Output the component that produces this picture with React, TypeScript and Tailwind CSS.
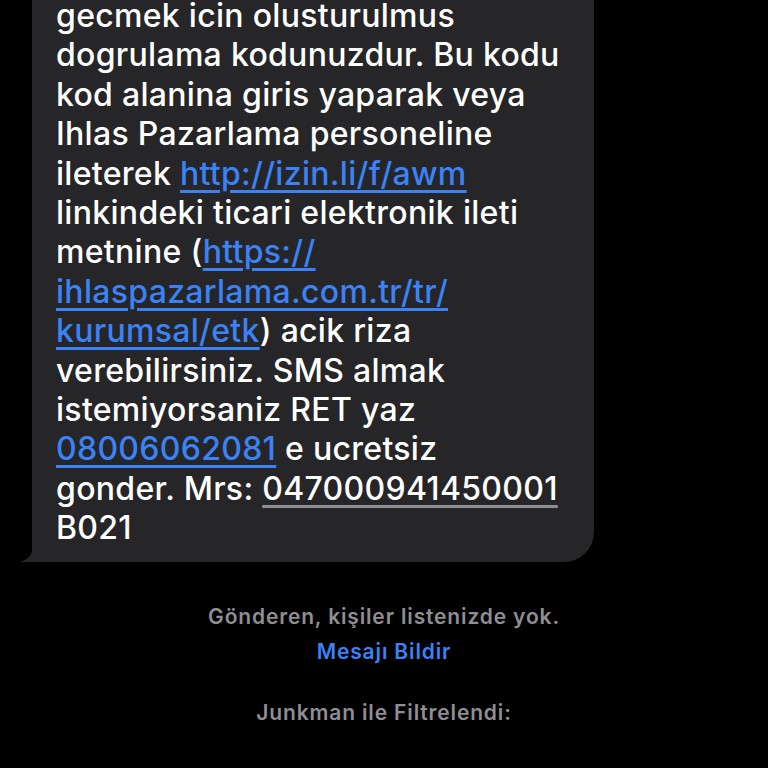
import React from 'react';

const Link: React.FC<{ children: React.ReactNode }> = ({ children }) => (
  <span className="text-[#3b82f6] underline decoration-[2.5px] underline-offset-[5px]">{children}</span>
);

const lines: React.ReactNode[] = [
  'gecmek icin olusturulmus',
  'dogrulama kodunuzdur. Bu kodu',
  'kod alanina giris yaparak veya',
  'Ihlas Pazarlama personeline',
  <>ileterek <Link>http://izin.li/f/awm</Link></>,
  'linkindeki ticari elektronik ileti',
  <>metnine (<Link>https://</Link></>,
  <Link>ihlaspazarlama.com.tr/tr/</Link>,
  <><Link>kurumsal/etk</Link>) acik riza</>,
  'verebilirsiniz. SMS almak',
  'istemiyorsaniz RET yaz',
  <><Link>08006062081</Link> e ucretsiz</>,
  <>gonder. Mrs: <span className="underline decoration-[#8e8e93] decoration-[2.5px] underline-offset-[5px]">047000941450001</span></>,
  'B021',
];

const App: React.FC = () => {
  return (
    <div className="w-[768px] h-[768px] overflow-hidden bg-black font-['Inter','Noto_Sans',sans-serif]">
      {/* Message bubble */}
      <div className="relative ml-[32px] w-[562px] -mt-[4px]">
        <div className="bg-[#262628] rounded-br-[30px] pl-[24px] pr-[12px] pb-[14px] text-white font-medium text-[32px] leading-[39.4px] tracking-[0.3px]">
          {lines.map((line, i) => (
            <div key={i} className="whitespace-nowrap">{line}</div>
          ))}
        </div>
        {/* Tail */}
        <svg className="absolute left-[-12px] bottom-0" width="40" height="16" viewBox="0 0 40 16">
          <path d="M12 0 L12 4 C12 10 6 14 0 16 L40 16 C30 16 22 12 12 0 Z" fill="#262628" />
        </svg>
      </div>

      {/* Footer */}
      <div className="flex flex-col items-center mt-[42px] font-semibold text-[21px] leading-[26px] tracking-[0.85px]">
        <p className="text-[#8e8e93]">Gönderen, kişiler listenizde yok.</p>
        <p className="mt-[9px] text-[#3b82f6]">Mesajı Bildir</p>
        <p className="mt-[35px] text-[#8e8e93]">Junkman ile Filtrelendi:</p>
      </div>
    </div>
  );
};

export default App;
